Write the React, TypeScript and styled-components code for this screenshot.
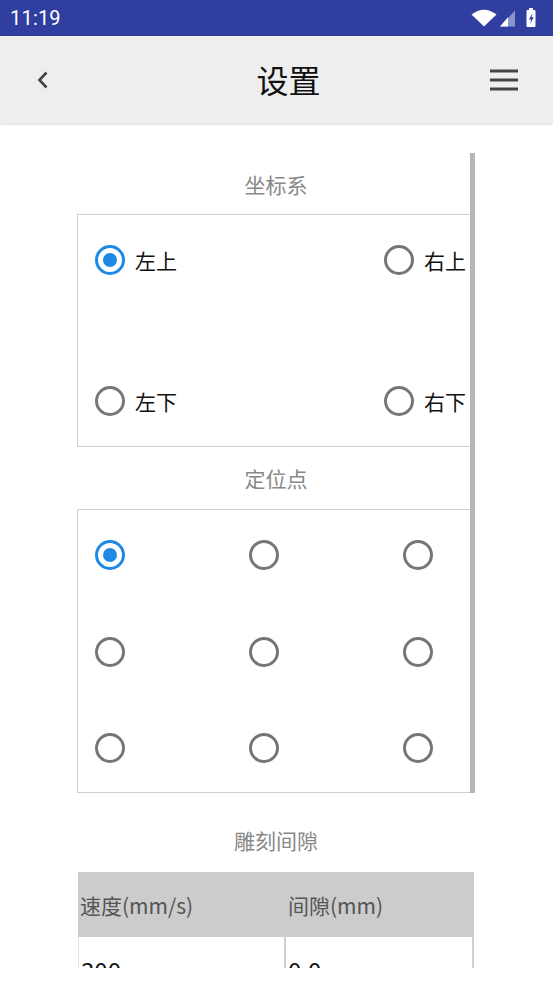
import React from "react";
import styled, { createGlobalStyle } from "styled-components";

const Global = createGlobalStyle`
  html, body { margin: 0; padding: 0; background: #ffffff; }
  body { font-family: "Noto Sans CJK SC", "Noto Sans", Roboto, sans-serif; }
  * { box-sizing: border-box; }
`;

const Page = styled.div`
  width: 553px;
  height: 984px;
  display: flex;
  flex-direction: column;
  background: #fff;
  overflow: hidden;
`;

const StatusBar = styled.div`
  height: 36px;
  background: #2f3e9f;
  display: flex;
  align-items: center;
  justify-content: space-between;
  padding: 0 12px 0 10px;
  color: #fff;
  flex-shrink: 0;
`;

const Time = styled.span`
  font-family: Roboto, "Liberation Sans", sans-serif;
  font-size: 20px;
  letter-spacing: 0.2px;
`;

const StatusIcons = styled.div`
  display: flex;
  align-items: center;
  gap: 3px;
`;

const Toolbar = styled.header`
  height: 87px;
  background: #eeeeee;
  display: grid;
  grid-template-columns: 1fr auto 1fr;
  align-items: center;
  padding: 0 34px 0 36px;
  box-shadow: 0 1px 3px rgba(0, 0, 0, 0.18);
  position: relative;
  z-index: 1;
  flex-shrink: 0;
`;

const Title = styled.h1`
  margin: 0 0 2px 0;
  padding-left: 22px;
  font-size: 32px;
  font-weight: 400;
  color: #111;
`;

const IconButton = styled.span<{ $end?: boolean }>`
  display: flex;
  align-items: center;
  justify-content: ${(p) => (p.$end ? "flex-end" : "flex-start")};
`;

const Scroll = styled.main`
  height: 845px;
  overflow: hidden;
  display: flex;
  padding-left: 77px;
  flex-shrink: 0;
`;

const Column = styled.div`
  width: 398px;
  position: relative;
  padding-top: 30px;
`;

const ScrollThumb = styled.div`
  position: absolute;
  right: 0;
  top: 30px;
  width: 5px;
  height: 640px;
  background: #b6b6b6;
  z-index: 2;
`;

const SectionTitle = styled.div<{ $mt: number; $mb: number }>`
  margin-top: ${(p) => p.$mt}px;
  margin-bottom: ${(p) => p.$mb}px;
  height: 30px;
  line-height: 30px;
  text-align: center;
  font-size: 21px;
  color: #888888;
`;

const Box = styled.div`
  border: 1px solid #cfcfcf;
`;

const CornerBox = styled(Box)`
  height: 233px;
  padding: 30px 8px 30px 17px;
  display: grid;
  grid-template-columns: auto auto;
  justify-content: space-between;
  align-content: space-between;
`;

const GridBox = styled(Box)`
  height: 284px;
  padding: 30px 0 0 17px;
  display: grid;
  grid-template-columns: repeat(3, 154px);
  grid-auto-rows: 30px;
  row-gap: 66.5px;
`;

const Option = styled.label`
  display: flex;
  align-items: center;
  gap: 10px;
  font-size: 21px;
  color: #111;
  height: 30px;
`;

const RadioCircle = styled.span<{ $on?: boolean }>`
  width: 30px;
  height: 30px;
  border-radius: 50%;
  border: 3px solid ${(p) => (p.$on ? "#1e88e5" : "#767676")};
  display: flex;
  align-items: center;
  justify-content: center;
  flex-shrink: 0;
  &::after {
    content: "";
    width: 14px;
    height: 14px;
    border-radius: 50%;
    background: ${(p) => (p.$on ? "#1e88e5" : "transparent")};
  }
`;

const Table = styled.div`
  width: 396px;
  margin-left: 1px;
`;

const TRow = styled.div<{ $head?: boolean }>`
  display: grid;
  grid-template-columns: 208px 188px;
  height: ${(p) => (p.$head ? "65px" : "60px")};
  background: ${(p) => (p.$head ? "#cccccc" : "#ffffff")};
`;

const Cell = styled.div<{ $head?: boolean }>`
  display: flex;
  align-items: ${(p) => (p.$head ? "center" : "flex-start")};
  padding: ${(p) => (p.$head ? "0 0 0 2px" : "15px 0 0 2px")};
  font-family: "Noto Sans CJK SC", Roboto, sans-serif;
  font-size: ${(p) => (p.$head ? "21px" : "24px")};
  color: ${(p) => (p.$head ? "#555555" : "#111111")};
  border-right: ${(p) => (p.$head ? "none" : "2px solid #d0d0d0")};
  border-left: ${(p) => (p.$head ? "none" : "1px solid #e4e4e4")};
  &:nth-child(2) {
    border-left: none;
  }
`;

function Radio({ on, label }: { on?: boolean; label?: string }) {
  return (
    <Option>
      <RadioCircle $on={on} />
      {label && <span>{label}</span>}
    </Option>
  );
}

export default function App() {
  return (
    <Page>
      <Global />
      <StatusBar>
        <Time>11:19</Time>
        <StatusIcons>
          <svg width="26" height="18" viewBox="0 0 26 18">
            <path d="M0.5 5.5 Q13 -4 25.5 5.5 L13 17.5 Z" fill="#fff" />
          </svg>
          <svg width="16" height="17" viewBox="0 0 16 17">
            <path d="M15 0.5 V16.5 H0 Z" fill="#fff" opacity="0.45" />
            <path d="M8 7.2 V16.5 H0 Z" fill="#fff" />
          </svg>
          <svg width="16" height="20" viewBox="0 0 16 20" style={{ marginLeft: 6 }}>
            <rect x="4" y="0" width="4" height="2.5" fill="#fff" />
            <rect x="1.5" y="2" width="9" height="17" rx="1" fill="#fff" />
            <path d="M7.5 5 L4 11.5 H6.2 L5 16 L8.8 9.2 H6.6 Z" fill="#2f3e9f" />
          </svg>
        </StatusIcons>
      </StatusBar>

      <Toolbar>
        <IconButton>
          <svg width="14" height="20" viewBox="0 0 14 20">
            <path d="M10.5 2.5 L3.5 10 L10.5 17.5" fill="none" stroke="#444" strokeWidth="2.6" />
          </svg>
        </IconButton>
        <Title>设置</Title>
        <IconButton $end>
          <svg width="30" height="24" viewBox="0 0 30 24">
            <rect x="1" y="1.5" width="28" height="3" fill="#444" />
            <rect x="1" y="10.5" width="28" height="3" fill="#444" />
            <rect x="1" y="19.5" width="28" height="3" fill="#444" />
          </svg>
        </IconButton>
      </Toolbar>

      <Scroll>
        <Column>
          <ScrollThumb />
          <SectionTitle $mt={16} $mb={15}>坐标系</SectionTitle>
          <CornerBox>
            <Radio on label="左上" />
            <Radio label="右上" />
            <Radio label="左下" />
            <Radio label="右下" />
          </CornerBox>

          <SectionTitle $mt={16} $mb={16}>定位点</SectionTitle>
          <GridBox>
            {Array.from({ length: 9 }).map((_, i) => (
              <Radio key={i} on={i === 0} />
            ))}
          </GridBox>

          <SectionTitle $mt={32} $mb={17}>雕刻间隙</SectionTitle>
          <Table>
            <TRow $head>
              <Cell $head>速度(mm/s)</Cell>
              <Cell $head>间隙(mm)</Cell>
            </TRow>
            <TRow>
              <Cell>300</Cell>
              <Cell>0.0</Cell>
            </TRow>
          </Table>
        </Column>
      </Scroll>
    </Page>
  );
}
